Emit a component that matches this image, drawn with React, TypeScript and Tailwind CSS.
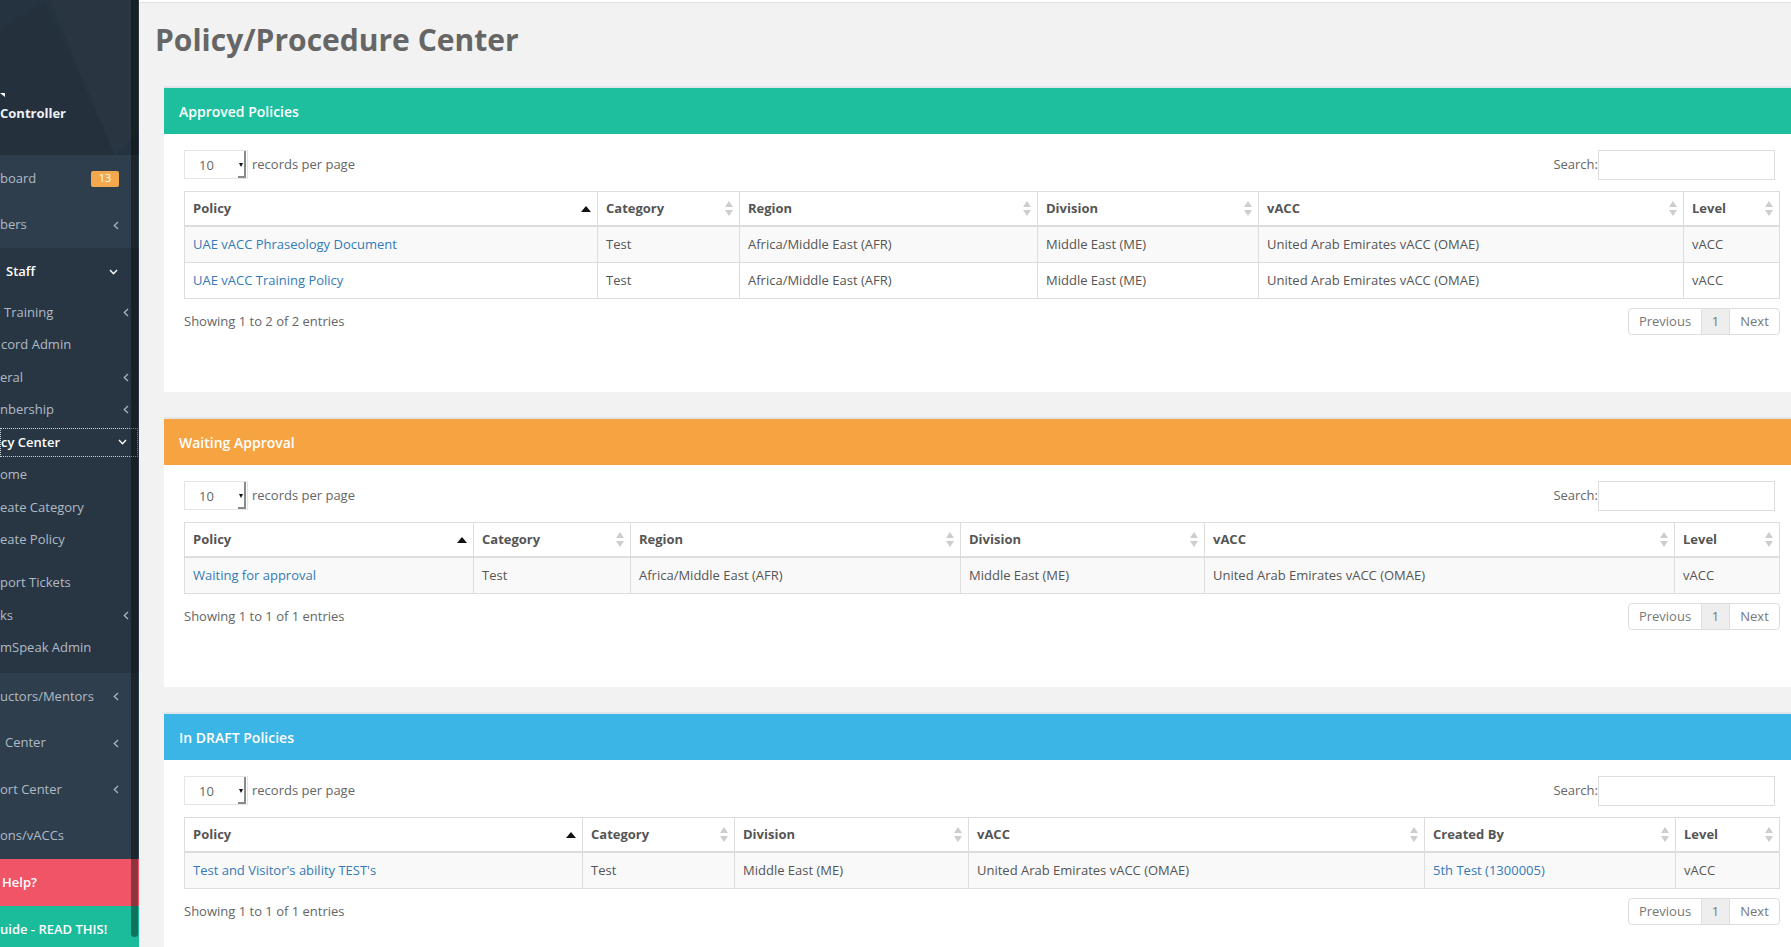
import React from 'react';

type Col = { label: string; w: string; sort?: 'asc' };
type Cell = string | { t: string; link: true };
type Panel = {
  title: string;
  head: string;
  cols: Col[];
  rows: Cell[][];
  info: string;
};

const panels: Panel[] = [
  {
    title: 'Approved Policies',
    head: 'bg-[#1dbf9e]',
    cols: [
      { label: 'Policy', w: 'w-[413px]', sort: 'asc' },
      { label: 'Category', w: 'w-[142px]' },
      { label: 'Region', w: 'w-[298px]' },
      { label: 'Division', w: 'w-[221px]' },
      { label: 'vACC', w: 'w-[425px]' },
      { label: 'Level', w: 'flex-1' },
    ],
    rows: [
      [
        { t: 'UAE vACC Phraseology Document', link: true },
        'Test',
        'Africa/Middle East (AFR)',
        'Middle East (ME)',
        'United Arab Emirates vACC (OMAE)',
        'vACC',
      ],
      [
        { t: 'UAE vACC Training Policy', link: true },
        'Test',
        'Africa/Middle East (AFR)',
        'Middle East (ME)',
        'United Arab Emirates vACC (OMAE)',
        'vACC',
      ],
    ],
    info: 'Showing 1 to 2 of 2 entries',
  },
  {
    title: 'Waiting Approval',
    head: 'bg-[#f6a342]',
    cols: [
      { label: 'Policy', w: 'w-[289px]', sort: 'asc' },
      { label: 'Category', w: 'w-[157px]' },
      { label: 'Region', w: 'w-[330px]' },
      { label: 'Division', w: 'w-[244px]' },
      { label: 'vACC', w: 'w-[470px]' },
      { label: 'Level', w: 'flex-1' },
    ],
    rows: [
      [
        { t: 'Waiting for approval', link: true },
        'Test',
        'Africa/Middle East (AFR)',
        'Middle East (ME)',
        'United Arab Emirates vACC (OMAE)',
        'vACC',
      ],
    ],
    info: 'Showing 1 to 1 of 1 entries',
  },
  {
    title: 'In DRAFT Policies',
    head: 'bg-[#3bb5e6]',
    cols: [
      { label: 'Policy', w: 'w-[398px]', sort: 'asc' },
      { label: 'Category', w: 'w-[152px]' },
      { label: 'Division', w: 'w-[234px]' },
      { label: 'vACC', w: 'w-[456px]' },
      { label: 'Created By', w: 'w-[251px]' },
      { label: 'Level', w: 'flex-1' },
    ],
    rows: [
      [
        { t: "Test and Visitor's ability TEST's", link: true },
        'Test',
        'Middle East (ME)',
        'United Arab Emirates vACC (OMAE)',
        { t: '5th Test (1300005)', link: true },
        'vACC',
      ],
    ],
    info: 'Showing 1 to 1 of 1 entries',
  },
];

function ChevLeft() {
  return (
    <svg width="6" height="9" viewBox="0 0 6 9" className="shrink-0">
      <polyline points="5,1 1.3,4.5 5,8" fill="none" stroke="#a9b3be" strokeWidth="1.3" />
    </svg>
  );
}

function ChevDown() {
  return (
    <svg width="9" height="6" viewBox="0 0 9 6" className="shrink-0">
      <polyline points="1,1 4.5,4.7 8,1" fill="none" stroke="#ffffff" strokeWidth="1.4" />
    </svg>
  );
}

function SortIcon({ dir }: { dir?: 'asc' }) {
  if (dir === 'asc') {
    return (
      <svg width="10" height="6" viewBox="0 0 10 6" className="shrink-0">
        <polygon points="0,6 5,0 10,6" fill="#111" />
      </svg>
    );
  }
  return (
    <svg width="8" height="15" viewBox="0 0 8 15" className="shrink-0">
      <polygon points="0,6 4,0 8,6" fill="#cdcdcd" />
      <polygon points="0,9 4,15 8,9" fill="#cdcdcd" />
    </svg>
  );
}

function Sidebar() {
  const sub = 'h-[32.5px] flex items-center text-[13px] text-[#b0bac4]';
  const top = 'h-[46.5px] flex items-center text-[13px] text-[#b0bac4] pr-[20px]';
  return (
    <aside className="w-[139px] shrink-0 h-full relative overflow-hidden bg-[#283644]">
      {/* brand */}
      <div className="h-[155px] relative bg-[#25323f] overflow-hidden">
        <svg className="absolute inset-0" width="139" height="155" viewBox="0 0 139 155">
          <polygon points="50,0 139,0 139,130 115,155" fill="#ffffff" fillOpacity="0.02" />
          <polygon points="0,30 45,0 115,155 0,155" fill="#000000" fillOpacity="0.02" />
        </svg>
        <div className="absolute left-0 top-[93px] w-0 h-0 border-l-[5px] border-t-[4px] border-l-transparent border-t-white" />
        <div className="absolute left-0 top-[103px] text-[13px] leading-[20px] font-bold text-[#eef1f4]">Controller</div>
      </div>

      <div className="bg-[#2f3e4d]">
        <div className="h-[47px] flex items-center text-[13px] text-[#b0bac4] pr-[20px]">
          <span>board</span>
          <span className="ml-auto w-[28px] h-[16px] rounded-[2px] bg-[#f4a84e] text-white text-[11px] flex items-center justify-center">13</span>
        </div>
        <div className="h-[46px] flex items-center text-[13px] text-[#b0bac4] pr-[20px]">
          <span>bers</span>
          <span className="ml-auto"><ChevLeft /></span>
        </div>
      </div>

      <div className="bg-[#283644] pb-[9px]">
        <div className="h-[48px] flex items-center text-[13px] text-white font-semibold pr-[21px]">
          <span className="pl-[6px]">Staff</span>
          <span className="ml-auto"><ChevDown /></span>
        </div>
        <div className={sub + ' pr-[10px]'}>
          <span className="pl-[4px]">Training</span>
          <span className="ml-auto"><ChevLeft /></span>
        </div>
        <div className={sub}>
          <span className="pl-[1px]">cord Admin</span>
        </div>
        <div className={sub + ' pr-[10px]'}>
          <span>eral</span>
          <span className="ml-auto"><ChevLeft /></span>
        </div>
        <div className={sub + ' pr-[10px]'}>
          <span>nbership</span>
          <span className="ml-auto"><ChevLeft /></span>
        </div>
        <div className="h-[32.5px] flex items-center py-[2px]">
          <div className="w-[138px] h-full flex items-center border border-dotted border-[#c9d0d6] text-[13px] text-white font-semibold pr-[10px]">
            <span>cy Center</span>
            <span className="ml-auto"><ChevDown /></span>
          </div>
        </div>
        <div className={sub}>ome</div>
        <div className={sub}>eate Category</div>
        <div className={sub}>eate Policy</div>
        <div className="h-[10.75px]" />
        <div className={sub}>port Tickets</div>
        <div className={sub + ' pr-[10px]'}>
          <span>ks</span>
          <span className="ml-auto"><ChevLeft /></span>
        </div>
        <div className={sub}>mSpeak Admin</div>
      </div>

      <div className="bg-[#2f3e4d]">
        <div className={top}>
          <span>uctors/Mentors</span>
          <span className="ml-auto"><ChevLeft /></span>
        </div>
        <div className={top}>
          <span className="pl-[5px]">Center</span>
          <span className="ml-auto"><ChevLeft /></span>
        </div>
        <div className={top}>
          <span>ort Center</span>
          <span className="ml-auto"><ChevLeft /></span>
        </div>
        <div className={top}>
          <span>ons/vACCs</span>
        </div>
      </div>

      <div className="h-[47px] bg-[#ef5566] flex items-center text-[13px] text-white font-semibold">
        <span className="pl-[2px]">Help?</span>
      </div>
      <div className="h-[47px] bg-[#1bbc9b] flex items-center text-[13px] text-white font-semibold">
        <span>uide - READ THIS!</span>
      </div>

      {/* scrollbar */}
      <div className="absolute left-[131px] top-0 w-[7px] h-[937px] bg-black/40 rounded-b-[4px]" />
    </aside>
  );
}

function renderCell(c: Cell) {
  if (typeof c === 'string') return <span>{c}</span>;
  return <span className="text-[#337ab7]">{c.t}</span>;
}

function DataPanel({ p }: { p: Panel }) {
  return (
    <section className="bg-white border-t-2 border-[#e2e6ea]">
      <div className={`${p.head} h-[46px] px-[15px] flex items-center text-white text-[14px] font-semibold`}>
        {p.title}
      </div>
      <div className="px-[20px] pt-[16px] pb-[57px]">
        <div className="h-[29px] flex items-center justify-between">
          <div className="flex items-center">
            <div className="relative w-[64px] h-[29px] bg-white border border-[#e5e5e5] flex items-center pl-[14px] pt-[3px] text-[13px] text-[#666]">
              10
              <div className="absolute right-[1px] top-0 bottom-0 w-[8px] border-r-2 border-b-2 border-[#8a8a8a] flex items-start justify-center pt-[12px]">
                <div className="w-0 h-0 border-l-[2.5px] border-r-[2.5px] border-t-[4px] border-l-transparent border-r-transparent border-t-[#111]" />
              </div>
            </div>
            <span className="ml-[4px] text-[13px] text-[#666]">records per page</span>
          </div>
          <div className="flex items-center mr-[5px]">
            <span className="text-[13px] text-[#666]">Search:</span>
            <div className="w-[177px] h-[30px] border border-[#ddd] bg-white" />
          </div>
        </div>

        <div className="mt-[12px] border-l border-t border-[#ddd] text-[13px]">
          <div className="flex">
            {p.cols.map((c) => (
              <div
                key={c.label}
                className={`${c.w} shrink-0 h-[35px] border-r border-b-2 border-[#ddd] pl-[8px] pr-[6px] flex items-center justify-between font-bold text-[#555]`}
              >
                <span>{c.label}</span>
                <SortIcon dir={c.sort} />
              </div>
            ))}
          </div>
          {p.rows.map((r, ri) => (
            <div key={ri} className={`flex ${ri % 2 === 0 ? 'bg-[#f9f9f9]' : 'bg-white'}`}>
              {r.map((cell, ci) => (
                <div
                  key={ci}
                  className={`${p.cols[ci].w} shrink-0 h-[36px] border-r border-b border-[#ddd] pl-[8px] flex items-center text-[#555]`}
                >
                  {renderCell(cell)}
                </div>
              ))}
            </div>
          ))}
        </div>

        <div className="mt-[9px] flex items-center justify-between">
          <span className="text-[13px] text-[#666]">{p.info}</span>
          <div className="flex h-[27px] text-[13px] text-[#777]">
            <span className="w-[74px] border border-[#ddd] rounded-l-[4px] flex items-center justify-center">Previous</span>
            <span className="w-[27px] border-y border-[#ddd] bg-[#eeeeee] flex items-center justify-center">1</span>
            <span className="w-[51px] border border-[#ddd] rounded-r-[4px] flex items-center justify-center">Next</span>
          </div>
        </div>
      </div>
    </section>
  );
}

export default function App() {
  return (
    <div className="w-[1791px] h-[947px] overflow-hidden flex bg-[#f2f2f2] font-['Open_Sans',sans-serif]">
      <Sidebar />
      <main className="flex-1 min-w-0 overflow-hidden">
        <div className="h-[2px] bg-white" />
        <div className="h-px bg-[#e3e3e3]" />
        <h1 className="mt-[20px] ml-[16px] text-[30px] leading-[33px] font-bold text-[#666]">
          Policy/Procedure Center
        </h1>
        <div className="ml-[25px] w-[1636px] mt-[30px] flex flex-col gap-[25px]">
          {panels.map((p) => (
            <DataPanel key={p.title} p={p} />
          ))}
        </div>
      </main>
    </div>
  );
}
